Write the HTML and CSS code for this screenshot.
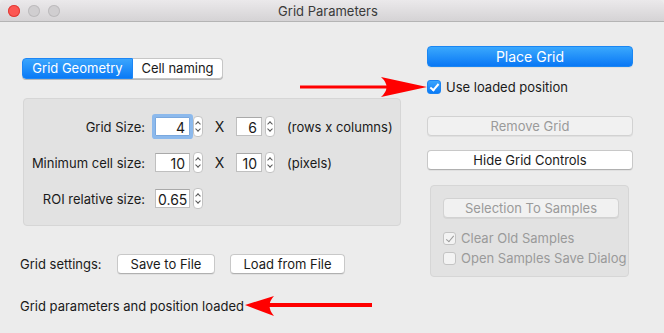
FILE: index.html
```html
<!DOCTYPE html>
<html lang="en">
<head>
    <meta charset="UTF-8">
    <title>Grid Parameters</title>
    <link rel="stylesheet" href="styles.css">
</head>
<body>
    <div class="window">
        <!-- Title bar -->
        <div class="titlebar">
            <div class="lights">
                <span class="light red"></span>
                <span class="light"></span>
                <span class="light"></span>
            </div>
            <div class="title">Grid Parameters</div>
        </div>

        <div class="content">
            <!-- Left side -->
            <div class="left">
                <div class="tabs">
                    <div class="tab active">Grid Geometry</div>
                    <div class="tab">Cell naming</div>
                </div>

                <div class="group geometry">
                    <div class="row">
                        <span class="label">Grid Size:</span>
                        <span class="field wide focus">4</span>
                        <span class="stepper"></span>
                        <span class="times">X</span>
                        <span class="field narrow">6</span>
                        <span class="stepper"></span>
                        <span class="unit">(rows x columns)</span>
                    </div>
                    <div class="row">
                        <span class="label">Minimum cell size:</span>
                        <span class="field wide">10</span>
                        <span class="stepper"></span>
                        <span class="times">X</span>
                        <span class="field narrow">10</span>
                        <span class="stepper"></span>
                        <span class="unit">(pixels)</span>
                    </div>
                    <div class="row">
                        <span class="label">ROI relative size:</span>
                        <span class="field wide left-text">0.65</span>
                        <span class="stepper"></span>
                    </div>
                </div>

                <div class="settings">
                    <span class="settings-label">Grid settings:</span>
                    <button class="btn save">Save to File</button>
                    <button class="btn load">Load from File</button>
                </div>

                <div class="status">Grid parameters and position loaded</div>
            </div>

            <!-- Right side -->
            <div class="right">
                <button class="btn primary">Place Grid</button>
                <label class="check main">
                    <span class="box checked"></span>
                    Use loaded position
                </label>
                <button class="btn disabled remove">Remove Grid</button>
                <button class="btn hide">Hide Grid Controls</button>

                <div class="group samples">
                    <button class="btn disabled">Selection To Samples</button>
                    <label class="check off">
                        <span class="box grey-checked"></span>
                        Clear Old Samples
                    </label>
                    <label class="check off">
                        <span class="box"></span>
                        Open Samples Save Dialog
                    </label>
                </div>
            </div>
        </div>

        <!-- Annotation arrows -->
        <svg class="arrows" width="664" height="333" viewBox="0 0 664 333">
            <rect x="300" y="85.5" width="90" height="3" fill="#ff0000"/>
            <path d="M427 87 L381 77 Q392 87 381 97 Z" fill="#ff0000"/>
            <rect x="268" y="303" width="104" height="4" fill="#ff0000"/>
            <path d="M245 305 L274 296 Q265 305.5 274 316 Z" fill="#ff0000"/>
        </svg>
    </div>
</body>
</html>
```

FILE: styles.css
```css
html, body {
    margin: 0;
    padding: 0;
    background-color: #ececec;
}

body {
    font-family: 'Inter', 'Roboto', sans-serif;
    font-size: 13px;
    color: #1a1a1a;
}

.window {
    position: relative;
    width: 664px;
    height: 333px;
    background-color: #ececec;
    overflow: hidden;
}

.titlebar {
    height: 21px;
    border-bottom: 1px solid #b4b4b4;
    background: linear-gradient(#ebe9eb, #d5d3d5);
    border-radius: 5px 5px 0 0;
    display: flex;
    align-items: center;
    position: relative;
}

.lights {
    display: flex;
    gap: 8px;
    padding-left: 8px;
}

.light {
    width: 12px;
    height: 12px;
    border-radius: 50%;
    background-color: #d0ced0;
    box-shadow: inset 0 0 0 1px #bdbbbd;
}

.light.red {
    background-color: #fc5753;
    box-shadow: inset 0 0 0 1px #df3d38;
}

.title {
    flex: 1;
    text-align: center;
    margin-right: 68px;
    color: #3a3a3a;
}

.content {
    display: flex;
}

.left {
    width: 381px;
    padding-left: 20px;
}

.right {
    width: 206px;
    margin-left: 26px;
    padding-top: 24px;
    display: flex;
    flex-direction: column;
}

/* Segmented control */
.tabs {
    display: flex;
    margin-top: 36px;
    margin-left: 2px;
}

.tab {
    width: 90px;
    height: 21px;
    line-height: 19px;
    box-sizing: border-box;
    text-align: center;
    background-color: #fff;
    border: 1px solid #c6c6c6;
    border-left: none;
    border-radius: 0 4px 4px 0;
    box-shadow: 0 1px 0 #b8b8b8;
}

.tab.active {
    width: 111px;
    background: linear-gradient(#3aa5fd, #0a7af6);
    color: #fff;
    border: 1px solid #1d86f5;
    border-radius: 4px 0 0 4px;
}

/* Group boxes */
.group {
    background-color: #e2e2e2;
    border: 1px solid #d6d6d6;
    border-radius: 4px;
}

.geometry {
    margin-top: 19px;
    margin-left: 3px;
    width: 376px;
    height: 109px;
    padding: 17px 0 0 0;
    display: flex;
    flex-direction: column;
    gap: 15px;
}

.row {
    display: flex;
    align-items: center;
    height: 21px;
}

.label {
    width: 121px;
    text-align: right;
    margin-right: 10px;
}

.field {
    height: 19px;
    line-height: 19px;
    background-color: #fff;
    border: 1px solid #bfbfbf;
    border-top-color: #a9a9a9;
    box-sizing: border-box;
    text-align: right;
    padding-right: 4px;
    font-size: 14px;
}

.field.wide {
    width: 35px;
}

.field.narrow {
    width: 26px;
}

.field.left-text {
    text-align: left;
    padding-left: 2px;
}

.field.focus {
    box-shadow: 0 0 0 3px #8cb9ec;
    border-color: #7aa8de;
    border-radius: 1px;
}

.stepper {
    width: 10px;
    height: 21px;
    margin-left: 3px;
    box-sizing: border-box;
    background-color: #fff;
    border: 1px solid #c3c3c3;
    border-radius: 4px;
    position: relative;
}

.stepper::before,
.stepper::after {
    content: '';
    position: absolute;
    left: 2px;
    width: 3px;
    height: 3px;
    border-left: 1px solid #555;
    border-top: 1px solid #555;
}

.stepper::before {
    top: 5px;
    transform: rotate(45deg);
}

.stepper::after {
    top: 10px;
    transform: rotate(225deg);
}

.times {
    width: 33px;
    text-align: center;
    font-size: 14px;
}

.unit {
    margin-left: 12px;
}

/* Buttons */
.btn {
    font-family: inherit;
    font-size: 13px;
    height: 20px;
    padding: 0;
    background-color: #fff;
    color: #1a1a1a;
    border: 1px solid #c8c8c8;
    border-bottom-color: #b0b0b0;
    border-radius: 4px;
    box-shadow: 0 1px 0 rgba(0, 0, 0, 0.05);
}

.btn.primary {
    height: 21px;
    background: linear-gradient(#3aa8fd, #0a78f5);
    border-color: #1a86f3;
    color: #fff;
    font-size: 14px;
}

.btn.disabled {
    background-color: #f1f1f1;
    color: #9a9a9a;
    border-color: #d2d2d2;
}

.btn.remove {
    margin-top: 21px;
}

.btn.hide {
    margin-top: 14px;
}

.settings {
    display: flex;
    align-items: center;
    margin-top: 28px;
}

.settings-label {
    width: 97px;
}

.btn.save {
    width: 98px;
}

.btn.load {
    width: 115px;
    margin-left: 15px;
}

.status {
    margin-top: 24px;
}

/* Checkboxes */
.check {
    display: flex;
    align-items: center;
    gap: 5px;
    height: 16px;
}

.check.main {
    margin-top: 12px;
}

.box {
    width: 14px;
    height: 14px;
    box-sizing: border-box;
    border: 1px solid #b8b8b8;
    background-color: #fff;
    border-radius: 3px;
    position: relative;
}

.box.checked {
    background: linear-gradient(#3aa5fd, #0a7af6);
    border-color: #1b84f3;
}

.box.checked::after,
.box.grey-checked::after {
    content: '';
    position: absolute;
    left: 4px;
    top: 1px;
    width: 3px;
    height: 7px;
    border-right: 2px solid #fff;
    border-bottom: 2px solid #fff;
    transform: rotate(40deg);
}

.box.grey-checked::after {
    border-color: #9a9a9a;
    border-width: 0 1.5px 1.5px 0;
}

.samples {
    margin-top: 15px;
    margin-left: 3px;
    width: 199px;
    height: 92px;
    padding: 12px 0 0 12px;
    box-sizing: border-box;
    display: flex;
    flex-direction: column;
}

.samples .btn {
    width: 176px;
}

.check.off {
    color: #9a9a9a;
    margin-top: 12px;
}

.check.off + .check.off {
    margin-top: 4px;
}

.check.off .box {
    width: 13px;
    height: 13px;
    background-color: #f3f3f3;
    border-color: #c4c4c4;
}

.arrows {
    position: absolute;
    left: 0;
    top: 0;
    pointer-events: none;
}
```
